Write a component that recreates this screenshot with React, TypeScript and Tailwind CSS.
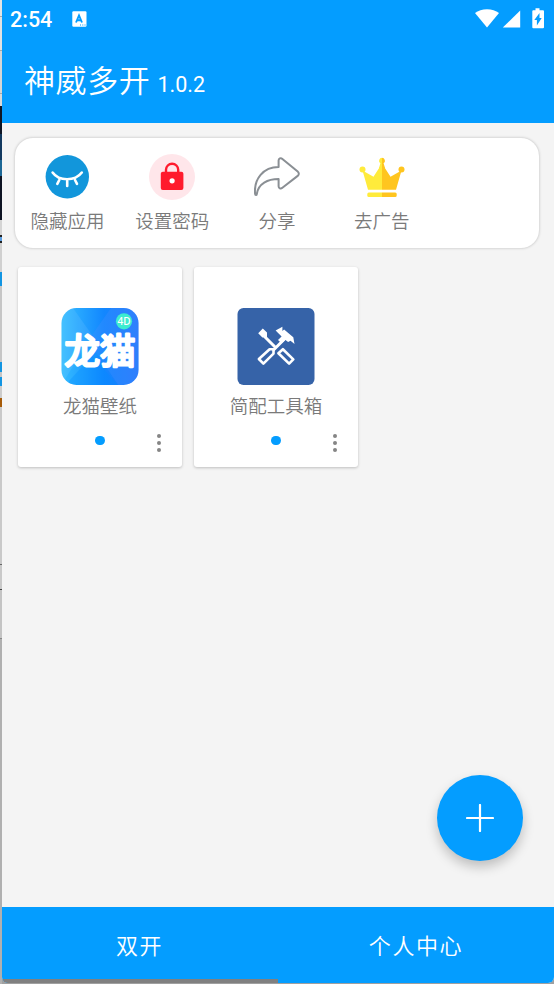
import type { ReactNode } from 'react';

const sans = "font-['Roboto','Noto_Sans_CJK_SC',sans-serif]";

// slices of the desktop visible behind the left edge of the window
const edge = [
  { h: 16, color: '#e4e4e4' },
  { h: 1, color: '#a8a8a8' },
  { h: 33, color: '#e2e2e2' },
  { h: 1, color: '#a8a8a8' },
  { h: 42, color: '#d6d6d6' },
  { h: 1, color: '#a8a8a8' },
  { h: 12, color: '#d9d9d9' },
  { h: 28, color: '#101624' },
  { h: 26, color: '#12395f' },
  { h: 16, color: '#1c6795' },
  { h: 44, color: '#0d1322' },
  { h: 15, color: '#d4d4d4' },
  { h: 2, color: '#222222' },
  { h: 4, color: '#5b9ee0' },
  { h: 2, color: '#222222' },
  { h: 29, color: '#d0d0d0' },
  { h: 14, color: '#1295e2' },
  { h: 76, color: '#c6c6c6' },
  { h: 10, color: '#1295e2' },
  { h: 5, color: '#c6c6c6' },
  { h: 9, color: '#1295e2' },
  { h: 12, color: '#cccccc' },
  { h: 9, color: '#a65b08' },
  { h: 157, color: '#c9c9c9' },
  { h: 1, color: '#666666' },
  { h: 24, color: '#c9c9c9' },
  { h: 1, color: '#444444' },
  { h: 48, color: '#c4c4c4' },
  { h: 1, color: '#888888' },
  { h: 345, color: '#b0b0b0' },
];

function HideIcon() {
  return (
    <svg width="46" height="46" viewBox="0 0 46 46" fill="none">
      <circle cx="23.3" cy="22.8" r="21.7" fill="#1296db" />
      <g stroke="#fff" strokeWidth="2.6" strokeLinecap="round">
        <path d="M8.6 18.5C15 27.5 31 27.5 37.8 18.5" />
        <path d="M15.3 26l-2 3.9M23.2 27v5M31 26l2 3.9" />
      </g>
    </svg>
  );
}

function LockIcon() {
  return (
    <svg width="46" height="46" viewBox="0 0 46 46" fill="none">
      <circle cx="23" cy="23" r="23" fill="#ffe6ea" />
      <path d="M17 18.5v-2.7a6.1 6.1 0 0 1 12.2 0v2.7" stroke="#ff1b2d" strokeWidth="2.4" />
      <rect x="11.8" y="17.7" width="22.6" height="18.4" rx="2" fill="#ff1b2d" />
      <circle cx="23.1" cy="26.8" r="2.6" fill="#fff" />
    </svg>
  );
}

function ShareIcon() {
  return (
    <svg width="46" height="46" viewBox="0 0 46 46" fill="none">
      <path
        d="M24.6 13V6.6c0-2 2-3.2 3.8-1.7l15.3 12.7c1.5 1.3 1.5 3 0 4.3L28.4 33.8c-1.8 1.5-3.8.4-3.8-1.6V25.1C13.8 25.1 4.3 29.6 2.8 40c-.2 1.5-1.6 1.4-1.7 0C-.4 24.9 9.4 13 24.6 13Z"
        stroke="#8a8f94"
        strokeWidth="2"
        strokeLinejoin="round"
      />
    </svg>
  );
}

function CrownIcon() {
  return (
    <svg width="46" height="46" viewBox="0 0 46 46">
      <g fill="#ffeb3b">
        <circle cx="3.5" cy="15.5" r="3" />
        <path d="M23 9.5 14.5 22.7 3.5 16.5 9 35.8h14z" />
        <path d="M9.8 38.6H23v4.5H9.8a1.5 1.5 0 0 1-1.5-1.5v-1.5a1.5 1.5 0 0 1 1.5-1.5z" />
        <path d="M23 3.8a3 3 0 0 0-1.6 5.5L20 14h3z" />
      </g>
      <g fill="#ffc51f">
        <circle cx="42.5" cy="15.5" r="3" />
        <path d="M23 9.5 31.5 22.7 42.5 16.5 37 35.8H23z" />
        <path d="M23 38.6h13.2a1.5 1.5 0 0 1 1.5 1.5v1.5a1.5 1.5 0 0 1-1.5 1.5H23z" />
        <path d="M23 3.8a3 3 0 0 1 1.6 5.5L26 14h-3z" />
      </g>
    </svg>
  );
}

function WallpaperLogo() {
  return (
    <svg width="78" height="78" viewBox="0 0 78 78">
      <defs>
        <linearGradient id="sky" x1="0" y1="0" x2="1" y2="0">
          <stop offset="0" stopColor="#35bdff" />
          <stop offset="0.55" stopColor="#1287ff" />
          <stop offset="1" stopColor="#2678fb" />
        </linearGradient>
        <clipPath id="tile">
          <rect x="0.5" y="0" width="77" height="77" rx="15" />
        </clipPath>
      </defs>
      <g clipPath="url(#tile)">
        <rect width="78" height="78" fill="url(#sky)" />
        <path d="M0 0h12l19 27L0 78z" fill="#fff" opacity="0.08" />
        <path d="M50 0h28v78H58L32 40 31 27z" fill="#4590ff" opacity="0.3" />
        <path d="M31 48 8 73v5h50z" fill="#008cff" opacity="0.3" />
      </g>
      <circle cx="63" cy="13.3" r="8.1" fill="#3cecd0" />
      <text x="63" y="17" textAnchor="middle" fontSize="10" fontWeight="500" fill="#fff" className="font-['Noto_Sans']">
        4D
      </text>
      <text
        x="39"
        y="55.8"
        textAnchor="middle"
        fontSize="35.5"
        fontWeight="400"
        fill="#fff"
        stroke="#fff"
        strokeWidth="2.8"
        strokeLinejoin="round"
        strokeLinecap="round"
        className="font-['Liberation_Sans','Noto_Sans_CJK_SC',sans-serif]"
      >
        龙猫
      </text>
    </svg>
  );
}

function ToolboxLogo() {
  return (
    <svg width="78" height="78" viewBox="0 0 78 78" fill="none">
      <rect x="0.5" y="0" width="77" height="77" rx="6" fill="#3663a8" />
      <g stroke="#fff" strokeWidth="2.6">
        <path d="M27.5 28.5 37.8 38.8M47 31.5 36 42.5" strokeWidth="3" />
        <path d="M32.6 41.2h3.9v4.4L26.4 55.6l-4.5-4.6z" strokeLinejoin="round" />
        <path d="M45.9 41.2 56.3 51.4l-4.2 4.2-10.7-10.4z" strokeLinejoin="round" />
      </g>
      <path
        d="M25.8 20.6 30 24.4v5.2h-4.6l-4.2-4.4zM38.6 22.4l6.8-3.7v4.4l1.7-1.7 9.2 7.8 1.2 6.7-4-3.2-2.4 1.3-2.6-2-4.1 3.2-3.4-3.3 3.6-3.5z"
        fill="#fff"
      />
    </svg>
  );
}

const actions = [
  { label: '隐藏应用', icon: <HideIcon /> },
  { label: '设置密码', icon: <LockIcon /> },
  { label: '分享', icon: <ShareIcon /> },
  { label: '去广告', icon: <CrownIcon /> },
];

function StatusBar() {
  return (
    <div className="flex h-[38px] items-center pr-[10px] pl-[8px]">
      <span className="relative top-px w-[62px] text-[21.5px] leading-none font-medium">2:54</span>
      <svg width="15" height="16" viewBox="0 0 15 16">
        <rect x="0.3" y="0.3" width="14.2" height="15.4" rx="1.2" fill="#fff" />
        <path d="M4 11.5 7 4.5l3 7M5.1 9.3h3.8" fill="none" stroke="#049dff" strokeWidth="1.9" />
        <path d="M8 14h1M10.3 14h1M12.5 14h1" stroke="#049dff" />
      </svg>
      <svg width="69" height="21" viewBox="0 0 69 21" fill="#fff" className="relative -top-px ml-auto">
        <path d="M0 5C6-.1 18-.1 24 5L12 19.5z" />
        <path d="M45.2 2.6v17H27.8z" />
        <path d="M60.5.3h4v2H68a1 1 0 0 1 1 1v16a1 1 0 0 1-1 1H58.3a1 1 0 0 1-1-1v-16a1 1 0 0 1 1-1h2.2z" />
        <path d="M64.5 5v5h2.2l-4.8 7.6v-5.5h-2.6z" fill="#049dff" />
      </svg>
    </div>
  );
}

function AppCard({ name, logo }: { name: string; logo: ReactNode }) {
  return (
    <div className="relative flex h-[200px] w-[164px] flex-col items-center rounded-[3px] bg-white pt-[41px] shadow-[0_1px_3px_rgba(0,0,0,0.22)]">
      {logo}
      <span className="mt-2 text-[18.5px] leading-[27px] font-[350] whitespace-nowrap text-[#7a7a7a]">{name}</span>
      <span className="mt-[14.5px] size-[9.5px] rounded-full bg-[#049dff]" />
      <div className="absolute right-[21px] bottom-[15px] flex flex-col gap-[3px]">
        <i className="size-[4px] rounded-full bg-[#858585]" />
        <i className="size-[4px] rounded-full bg-[#858585]" />
        <i className="size-[4px] rounded-full bg-[#858585]" />
      </div>
    </div>
  );
}

export default function App() {
  return (
    <div className={`flex h-[984px] w-[554px] overflow-hidden bg-[#a0a0a0] ${sans}`}>
      <div className="flex w-[2px] shrink-0 flex-col">
        {edge.map((s, i) => (
          <div key={i} className="shrink-0" style={{ height: s.h, background: s.color }} />
        ))}
      </div>

      <div className="relative flex h-[983px] flex-1 flex-col overflow-hidden rounded-b-[6px] bg-[#f4f4f4]">
        <header className="h-[123px] bg-[#049dff] text-white">
          <StatusBar />
          <div className="flex items-baseline pt-[21px] pl-[22px]">
            <h1 className="text-[31px] leading-[46px] font-[350] tracking-[0.6px]">神威多开</h1>
            <span className="ml-[7px] text-[21.5px] font-normal">1.0.2</span>
          </div>
        </header>

        <main className="flex-1">
          <section className="mt-[15px] ml-[13px] grid h-[110px] w-[524px] grid-cols-5 rounded-[18px] bg-white shadow-[0_0_3px_rgba(0,0,0,0.25)]">
            {actions.map((a) => (
              <div key={a.label} className="flex flex-col items-center pt-4">
                {a.icon}
                <span className="mt-[9px] text-[18.5px] leading-[27px] font-[350] text-[#7a7a7a]">{a.label}</span>
              </div>
            ))}
          </section>

          <section className="mt-[19px] ml-4 flex gap-3">
            <AppCard name="龙猫壁纸" logo={<WallpaperLogo />} />
            <AppCard name="简配工具箱" logo={<ToolboxLogo />} />
          </section>
        </main>

        <button className="absolute right-[31px] bottom-[122px] flex size-[86px] items-center justify-center rounded-full bg-[#049dff] shadow-[0_6px_12px_rgba(0,0,0,0.22)]">
          <svg width="28" height="28" viewBox="0 0 28 28" stroke="#fff" strokeWidth="2.2" strokeLinecap="round">
            <path d="M14 1v26M1 14h26" />
          </svg>
        </button>

        <nav className="grid h-[76px] grid-cols-2 grid-rows-[76px] bg-[#049dff] text-center text-[22px] leading-[80px] font-[350] tracking-[1.6px] text-white">
          <div className="h-[76px] border-b-4 border-[#808080] pr-px">双开</div>
          <div>个人中心</div>
        </nav>
      </div>
    </div>
  );
}
